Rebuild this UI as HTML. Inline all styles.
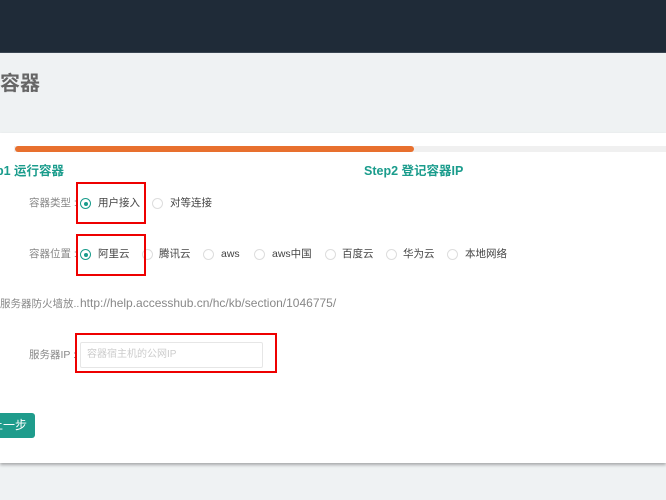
<!DOCTYPE html>
<html><head><meta charset="utf-8"><style>
*{margin:0;padding:0;box-sizing:border-box}
body{width:666px;height:500px;overflow:hidden;background:#eff2f3;font-family:"Liberation Sans","Noto Sans CJK SC",sans-serif;position:relative}
.a{position:absolute;white-space:nowrap;line-height:14px}
.hdr{left:0;top:0;width:666px;height:53px;background:#1f2b38;border-bottom:1px solid #3a4652}
.card{left:0;top:133px;width:666px;height:330px;background:#fff;box-shadow:0 2px 3px rgba(0,0,0,.3)}
.lbl{font-size:10.5px;color:#888}
.opt{font-size:10.5px;color:#444}
.r{width:11px;height:11px;border:1px solid #ddd;border-radius:50%;background:#fff}
.r.on{border-color:#1a9c8c}
.r.on:after{content:"";position:absolute;left:2.5px;top:2.5px;width:4px;height:4px;border-radius:50%;background:#1a9c8c}
.box{border:2px solid #e00}
.step{font-size:12.5px;color:#1a9c8c;font-weight:bold}
</style></head><body>
<div class="a hdr"></div>
<div class="a" style="left:0;top:72px;font-size:20px;line-height:24px;font-weight:bold;color:#666">容器</div>
<div class="a card"></div>
<div class="a" style="left:14px;top:146px;width:652px;height:6px;background:#f0f0f0"></div>
<div class="a" style="left:15px;top:146px;width:399px;height:6px;background:#e8702e;border-radius:3px"></div>
<div class="a step" style="left:-4px;top:164px">p1 运行容器</div>
<div class="a step" style="left:364px;top:164px">Step2 登记容器IP</div>
<div class="a lbl" style="left:29px;top:196px">容器类型 :</div>
<div class="a r on" style="left:80px;top:198px"></div><div class="a opt" style="left:98px;top:196px">用户接入</div>
<div class="a r" style="left:152px;top:198px"></div><div class="a opt" style="left:170px;top:196px">对等连接</div>
<div class="a box" style="left:76px;top:182px;width:70px;height:42px"></div>
<div class="a lbl" style="left:29px;top:247px">容器位置 :</div>
<div class="a r on" style="left:80px;top:249px"></div><div class="a opt" style="left:98px;top:247px">阿里云</div>
<div class="a r" style="left:142px;top:249px"></div><div class="a opt" style="left:159px;top:247px">腾讯云</div>
<div class="a r" style="left:203px;top:249px"></div><div class="a opt" style="left:221px;top:247px">aws</div>
<div class="a r" style="left:254px;top:249px"></div><div class="a opt" style="left:272px;top:247px">aws中国</div>
<div class="a r" style="left:325px;top:249px"></div><div class="a opt" style="left:342px;top:247px">百度云</div>
<div class="a r" style="left:386px;top:249px"></div><div class="a opt" style="left:403px;top:247px">华为云</div>
<div class="a r" style="left:447px;top:249px"></div><div class="a opt" style="left:465px;top:247px">本地网络</div>
<div class="a box" style="left:76px;top:234px;width:70px;height:42px"></div>
<div class="a lbl" style="left:0;top:297px;width:79px;overflow:hidden">服务器防火墙放...</div>
<div class="a" style="left:80px;top:296px;font-size:12px;color:#888">http://help.accesshub.cn/hc/kb/section/1046775/</div>
<div class="a lbl" style="left:29px;top:348px">服务器IP :</div>
<div class="a" style="left:80px;top:342px;width:183px;height:26px;border:1px solid #e6e6e6;border-radius:2px"></div>
<div class="a" style="left:87px;top:348px;font-size:10px;color:#ccc">容器宿主机的公网IP</div>
<div class="a box" style="left:75px;top:333px;width:202px;height:40px"></div>
<div class="a" style="left:-20px;top:413px;width:55px;height:25px;background:#1f9c8c;border-radius:3px;color:#fff;font-size:12px;line-height:25px;text-align:right;padding-right:8px">上一步</div>
</body></html>
